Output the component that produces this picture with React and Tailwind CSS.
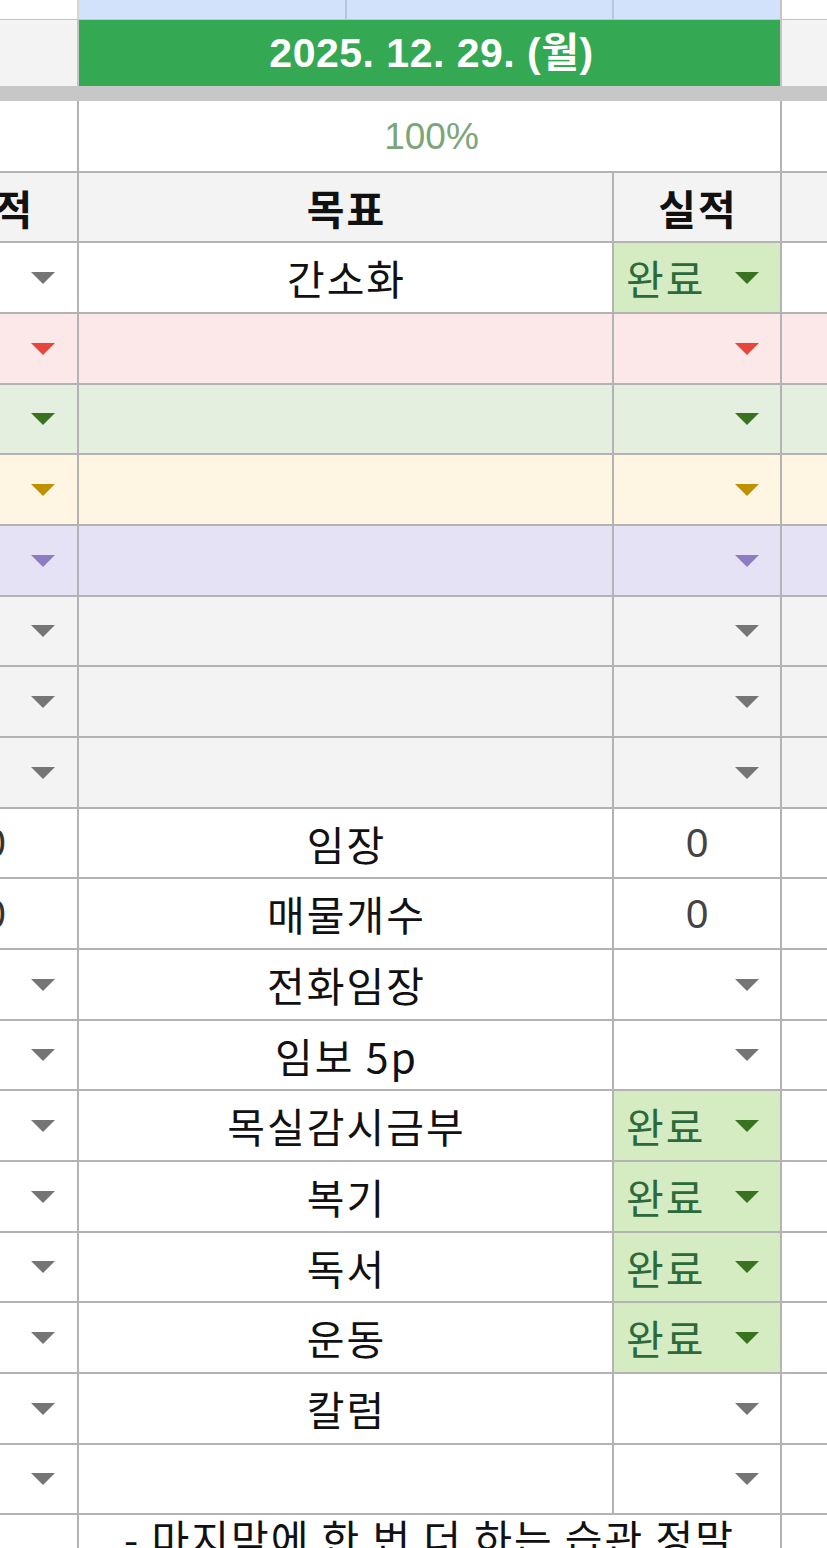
import React from "react";

const FONT = { fontFamily: '"Noto Sans CJK KR", "Noto Sans", sans-serif' };

function Tri({ color }) {
  return (
    <svg width="24" height="12" viewBox="0 0 24 12" className={color}>
      <path d="M0 0H24L12 12Z" fill="currentColor" />
    </svg>
  );
}

// 18 data rows, pitch ~70.67px
const rows = [
  { h: "h-[71px]", bg: "bg-white", d: "bg-white", a: "tri", tri: "text-[#757575]", b: "간소화", c: "done" },
  { h: "h-[71px]", bg: "bg-[#fce8e8]", d: "bg-[#fce8e8]", a: "tri", tri: "text-[#e8453c]", c: "tri" },
  { h: "h-[70px]", bg: "bg-[#e5efe0]", d: "bg-[#e5efe0]", a: "tri", tri: "text-[#3a7320]", c: "tri" },
  { h: "h-[71px]", bg: "bg-[#fef6e2]", d: "bg-[#fef6e2]", a: "tri", tri: "text-[#bf9000]", c: "tri" },
  { h: "h-[71px]", bg: "bg-[#e6e2f6]", d: "bg-[#e6e2f6]", a: "tri", tri: "text-[#8e7cc3]", c: "tri" },
  { h: "h-[70px]", bg: "bg-[#f3f3f3]", d: "bg-[#f3f3f3]", a: "tri", tri: "text-[#757575]", c: "tri" },
  { h: "h-[71px]", bg: "bg-[#f3f3f3]", d: "bg-[#f3f3f3]", a: "tri", tri: "text-[#757575]", c: "tri" },
  { h: "h-[71px]", bg: "bg-[#f3f3f3]", d: "bg-[#f3f3f3]", a: "tri", tri: "text-[#757575]", c: "tri" },
  { h: "h-[70px]", bg: "bg-white", d: "bg-white", a: "zero", b: "임장", c: "zero" },
  { h: "h-[71px]", bg: "bg-white", d: "bg-white", a: "zero", b: "매물개수", c: "zero" },
  { h: "h-[71px]", bg: "bg-white", d: "bg-white", a: "tri", tri: "text-[#757575]", b: "전화임장", c: "tri" },
  { h: "h-[70px]", bg: "bg-white", d: "bg-white", a: "tri", tri: "text-[#757575]", b: "임보 5p", c: "tri" },
  { h: "h-[71px]", bg: "bg-white", d: "bg-white", a: "tri", tri: "text-[#757575]", b: "목실감시금부", c: "done" },
  { h: "h-[71px]", bg: "bg-white", d: "bg-white", a: "tri", tri: "text-[#757575]", b: "복기", c: "done" },
  { h: "h-[70px]", bg: "bg-white", d: "bg-white", a: "tri", tri: "text-[#757575]", b: "독서", c: "done" },
  { h: "h-[71px]", bg: "bg-white", d: "bg-white", a: "tri", tri: "text-[#757575]", b: "운동", c: "done" },
  { h: "h-[71px]", bg: "bg-white", d: "bg-white", a: "tri", tri: "text-[#757575]", b: "칼럼", c: "tri" },
  { h: "h-[70px]", bg: "bg-white", d: "bg-white", a: "tri", tri: "text-[#757575]", c: "tri" },
];

const NUM = { fontFamily: '"Liberation Sans", sans-serif' };

function DataRow({ r }) {
  return (
    <div className={`flex ${r.h} border-b-2 border-[#b3b3b3]`}>
      <div className={`w-[167px] shrink-0 border-r-2 border-[#b3b3b3] ${r.bg} flex items-center`}>
        {r.a === "tri" && (
          <div className="ml-auto mr-[22px] flex items-center">
            <Tri color={r.tri} />
          </div>
        )}
        {r.a === "zero" && (
          <span className="w-full text-center text-[40px] leading-none text-[#333]" style={NUM}>
            0
          </span>
        )}
      </div>
      <div className={`w-[535px] shrink-0 border-r-2 border-[#b3b3b3] ${r.bg} flex items-center justify-center`}>
        {r.b && <span className="text-[41px] leading-none tracking-[2px] text-[#111] pl-[2px]">{r.b}</span>}
      </div>
      {r.c === "done" ? (
        <div className="w-[168px] shrink-0 border-r-2 border-[#b3b3b3] bg-[#d5ecc3] flex items-center pl-[12px] pr-[21px]">
          <span className="text-[41px] leading-none tracking-[2px] text-[#2c6a3c]">완료</span>
          <div className="ml-auto flex items-center">
            <Tri color="text-[#3a7320]" />
          </div>
        </div>
      ) : r.c === "zero" ? (
        <div className="w-[168px] shrink-0 border-r-2 border-[#b3b3b3] bg-white flex items-center justify-center">
          <span className="text-[40px] leading-none text-[#444]" style={NUM}>
            0
          </span>
        </div>
      ) : (
        <div className={`w-[168px] shrink-0 border-r-2 border-[#b3b3b3] ${r.bg} flex items-center justify-end pr-[21px]`}>
          <Tri color={r.tri} />
        </div>
      )}
      <div className={`flex-1 ${r.d}`} />
    </div>
  );
}

export default function App() {
  return (
    <div className="w-[827px] h-[1548px] overflow-hidden bg-white" style={FONT}>
      <div className="ml-[-88px] w-[1000px]">
        {/* top strip */}
        <div className="flex h-[20px] border-b border-[#c4c4c4]">
          <div className="w-[167px] shrink-0 border-r-2 border-[#d6d6d6] bg-white" />
          <div className="w-[268px] shrink-0 border-r-2 border-[#b9c6da] bg-[#d3e2fb]" />
          <div className="w-[267px] shrink-0 border-r-2 border-[#b9c6da] bg-[#d3e2fb]" />
          <div className="w-[168px] shrink-0 border-r-2 border-[#c4c4c4] bg-[#d3e2fb]" />
          <div className="flex-1 bg-white" />
        </div>
        {/* date */}
        <div className="flex h-[66px]">
          <div className="w-[167px] shrink-0 border-r-2 border-[#c4c4c4] bg-[#f3f3f3]" />
          <div className="w-[703px] shrink-0 border-r-2 border-[#c4c4c4] bg-[#34a853] flex items-center justify-center">
            <span
              className="text-[41px] font-bold leading-none text-white tracking-[0.5px] ml-[4px]"
              style={{ fontFamily: '"Liberation Sans", "Noto Sans CJK KR", sans-serif' }}
            >
              2025. 12. 29. (월)
            </span>
          </div>
          <div className="flex-1 bg-[#f3f3f3]" />
        </div>
        {/* frozen divider */}
        <div className="h-[15px] bg-[#c7c7c7]" />
        {/* percent */}
        <div className="flex h-[72px] border-b-2 border-[#b3b3b3]">
          <div className="w-[167px] shrink-0 border-r-2 border-[#b3b3b3] bg-white" />
          <div className="w-[703px] shrink-0 border-r-2 border-[#b3b3b3] bg-white flex items-center justify-center">
            <span className="text-[37px] leading-none text-[#7ba57a] ml-[4px]" style={NUM}>
              100%
            </span>
          </div>
          <div className="flex-1 bg-white" />
        </div>
        {/* header */}
        <div className="flex h-[70px] border-b-2 border-[#b3b3b3] bg-[#f3f3f3]">
          <div className="w-[167px] shrink-0 border-r-2 border-[#b3b3b3] flex items-center justify-center">
            <span className="text-[41px] font-bold leading-none tracking-[2px] text-[#111]">실적</span>
          </div>
          <div className="w-[535px] shrink-0 border-r-2 border-[#b3b3b3] flex items-center justify-center">
            <span className="text-[41px] font-bold leading-none tracking-[2px] text-[#111] pl-[2px]">목표</span>
          </div>
          <div className="w-[168px] shrink-0 border-r-2 border-[#b3b3b3] flex items-center justify-center">
            <span className="text-[41px] font-bold leading-none tracking-[2px] text-[#111] pl-[2px]">실적</span>
          </div>
          <div className="flex-1" />
        </div>
        {rows.map((r, i) => (
          <DataRow key={i} r={r} />
        ))}
        {/* note row, cut off */}
        <div className="flex h-[60px]">
          <div className="w-[167px] shrink-0 border-r-2 border-[#b3b3b3] bg-white" />
          <div className="w-[703px] shrink-0 border-r-2 border-[#b3b3b3] bg-white flex justify-center">
            <span className="text-[41px] leading-[1.08] tracking-[2px] text-[#111] whitespace-nowrap">
              - 마지막에 한 번 더 하는 습관 정말
            </span>
          </div>
          <div className="flex-1 bg-white" />
        </div>
      </div>
    </div>
  );
}
